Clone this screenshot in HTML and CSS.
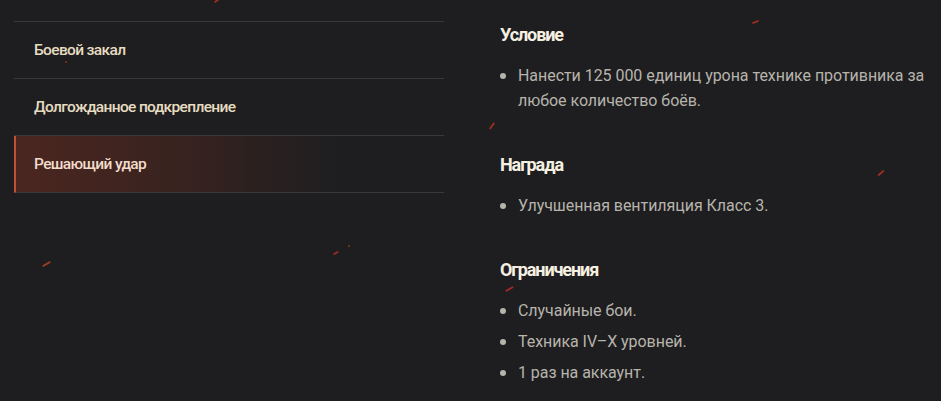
FILE: index.html
```html
<!DOCTYPE html>
<html lang="ru">
<head>
    <meta charset="UTF-8">
    <meta name="viewport" content="width=device-width, initial-scale=1.0">
    <title>Боевые задачи</title>
    <link rel="stylesheet" href="styles.css">
</head>
<body>
    <!-- decorative sparks -->
    <div class="sparks">
        <span class="spark s1"></span>
        <span class="spark s2"></span>
        <span class="spark s3"></span>
        <span class="spark s4"></span>
        <span class="spark s5"></span>
        <span class="spark s6"></span>
        <span class="spark s7"></span>
        <span class="spark s8"></span>
        <span class="spark s9"></span>
    </div>

    <main class="page">
        <!-- Task list -->
        <nav class="tasks">
            <a class="task" href="#">Боевой закал</a>
            <a class="task" href="#">Долгожданное подкрепление</a>
            <a class="task task-active" href="#">Решающий удар</a>
        </nav>

        <!-- Task details -->
        <section class="details">
            <div class="block">
                <h3>Условие</h3>
                <ul>
                    <li>Нанести 125 000 единиц урона технике противника за любое количество боёв.</li>
                </ul>
            </div>
            <div class="block">
                <h3>Награда</h3>
                <ul>
                    <li>Улучшенная вентиляция Класс 3.</li>
                </ul>
            </div>
            <div class="block">
                <h3>Ограничения</h3>
                <ul>
                    <li>Случайные бои.</li>
                    <li>Техника IV–X уровней.</li>
                    <li>1 раз на аккаунт.</li>
                </ul>
            </div>
        </section>
    </main>
</body>
</html>
```

FILE: styles.css
```css
/* Global */
body {
    margin: 0;
    background: #1e1e20;
    color: #b7b4ac;
    font-family: Roboto, "Liberation Sans", sans-serif;
    overflow: hidden;
}

.page {
    display: grid;
    grid-template-columns: 430px 1fr;
    column-gap: 56px;
    padding: 21px 2px 0 14px;
    position: relative;
}

/* Task list */
.tasks {
    display: flex;
    flex-direction: column;
    align-self: start;
    border-top: 1px solid #38383a;
}

.task {
    display: flex;
    align-items: center;
    height: 56px;
    padding-left: 20px;
    border-bottom: 1px solid #38383a;
    color: #e6dcc0;
    font-size: 15.5px;
    font-weight: 500;
    letter-spacing: -0.65px;
    text-decoration: none;
}

.task-active {
    padding-left: 18px;
    border-left: 2px solid #c2522f;
    background: linear-gradient(90deg, #4b2620 0%, #3a231f 35%, rgba(30, 30, 32, 0) 75%);
    color: #f2dccb;
}

/* Details */
.details {
    padding-top: 4px;
}

.block {
    margin-bottom: 42px;
}

.block:last-child {
    margin-bottom: 0;
}

.details h3 {
    margin: 0 0 18px;
    font-size: 18px;
    line-height: 20px;
    font-weight: 700;
    letter-spacing: -1.1px;
    color: #f6f0e2;
}

.details ul {
    list-style: none;
    margin: 0;
    padding: 0;
    display: flex;
    flex-direction: column;
    gap: 6px;
}

.details li {
    position: relative;
    padding-left: 18px;
    font-size: 16px;
    line-height: 25px;
    letter-spacing: -0.05px;
}

.details li::before {
    content: "";
    position: absolute;
    left: 0;
    top: 10px;
    width: 6px;
    height: 6px;
    border-radius: 50%;
    background: #b7b4ac;
}

/* Sparks */
.sparks {
    position: absolute;
    inset: 0;
    pointer-events: none;
}

.spark {
    position: absolute;
    width: 8px;
    height: 2px;
    border-radius: 1px;
    background: #b8321e;
    transform: rotate(-30deg);
    opacity: 0.8;
}

.s1 { left: 214px; top: 0; width: 5px; }
.s2 { left: 752px; top: 21px; width: 7px; transform: rotate(-20deg); }
.s3 { left: 488px; top: 125px; width: 8px; transform: rotate(-55deg); }
.s4 { left: 877px; top: 172px; width: 8px; transform: rotate(-40deg); }
.s5 { left: 505px; top: 288px; width: 9px; background: #c22a2a; }
.s6 { left: 42px; top: 263px; width: 9px; background: #c2491f; }
.s7 { left: 333px; top: 252px; width: 6px; }
.s8 { left: 348px; top: 245px; width: 2px; height: 2px; }
.s9 { left: 65px; top: 61px; width: 2px; height: 2px; }
```
